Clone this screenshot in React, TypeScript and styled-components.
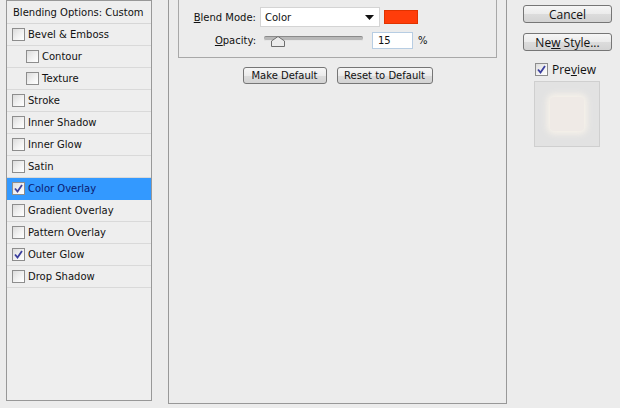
import React from "react";
import styled, { createGlobalStyle } from "styled-components";

const GlobalStyle = createGlobalStyle`
  html, body {
    margin: 0;
    padding: 0;
    background: #ececec;
  }
`;

const styles = [
  { name: "Bevel & Emboss", checked: false, nested: false },
  { name: "Contour", checked: false, nested: true },
  { name: "Texture", checked: false, nested: true },
  { name: "Stroke", checked: false, nested: false },
  { name: "Inner Shadow", checked: false, nested: false },
  { name: "Inner Glow", checked: false, nested: false },
  { name: "Satin", checked: false, nested: false },
  { name: "Color Overlay", checked: true, nested: false, active: true },
  { name: "Gradient Overlay", checked: false, nested: false },
  { name: "Pattern Overlay", checked: false, nested: false },
  { name: "Outer Glow", checked: true, nested: false },
  { name: "Drop Shadow", checked: false, nested: false },
];

function Check({ checked }: { checked: boolean }) {
  return (
    <Box>
      {checked && (
        <svg width="9" height="9" viewBox="0 0 9 9">
          <path d="M1 4.5 L3.5 7.5 L8 1" fill="none" stroke="#3b3f9e" strokeWidth="1.8" />
        </svg>
      )}
    </Box>
  );
}

function App() {
  return (
    <Page>
      <GlobalStyle />
      <StyleList>
        <Header>Blending Options: Custom</Header>
        {styles.map((s) => (
          <Row key={s.name} $active={!!s.active} $nested={s.nested}>
            <Check checked={s.checked} />
            <RowLabel>{s.name}</RowLabel>
          </Row>
        ))}
      </StyleList>

      <Settings>
        <Group>
          <FieldRow>
            <Label><u>B</u>lend Mode:</Label>
            <Select>
              <span>Color</span>
              <svg width="9" height="5" viewBox="0 0 9 5">
                <path d="M0 0 H9 L4.5 5 Z" fill="#111" />
              </svg>
            </Select>
            <Swatch />
          </FieldRow>
          <FieldRow $top={5}>
            <Label><u>O</u>pacity:</Label>
            <Slider>
              <Track />
              <Thumb width="14" height="11" viewBox="0 0 14 11">
                <path d="M0.5 10.5 V5 L7 0.5 L13.5 5 V10.5 Z" fill="#ececec" stroke="#6e6e6e" />
              </Thumb>
            </Slider>
            <NumberBox>15</NumberBox>
            <Unit>%</Unit>
          </FieldRow>
        </Group>
        <ButtonRow>
          <Button $w={84}><span>Make Default</span></Button>
          <Button $w={96}><span>Reset to Default</span></Button>
        </ButtonRow>
      </Settings>

      <Side>
        <Button $w={89} $big><span>Cancel</span></Button>
        <Button $w={89} $big><span>Ne<u>w</u> Style...</span></Button>
        <PreviewRow>
          <Check checked />
          <span>Pre<u>v</u>iew</span>
        </PreviewRow>
        <PreviewBox>
          <Glow />
        </PreviewBox>
      </Side>
    </Page>
  );
}

export default App;

const Page = styled.div`
  width: 620px;
  height: 408px;
  overflow: hidden;
  display: flex;
  align-items: flex-start;
  background: #ececec;
  font-family: "DejaVu Sans", Verdana, sans-serif;
  font-size: 10px;
  color: #111;
`;

const StyleList = styled.div`
  box-sizing: border-box;
  margin-left: 6px;
  width: 146px;
  height: 401px;
  border: 1px solid #989898;
  background: #eeeeee;
  display: flex;
  flex-direction: column;
`;

const Header = styled.div`
  box-sizing: border-box;
  height: 23px;
  padding-left: 6px;
  display: flex;
  align-items: center;
  border-bottom: 1px solid #d6d6d6;
`;

const Row = styled.div<{ $active: boolean; $nested: boolean }>`
  box-sizing: border-box;
  height: 22px;
  display: flex;
  align-items: center;
  gap: 3px;
  padding-left: ${(p) => (p.$nested ? 19 : 5)}px;
  border-bottom: 1px solid ${(p) => (p.$active ? "#3399ff" : "#d9d9d9")};
  background: ${(p) => (p.$active ? "#3399ff" : "transparent")};
  color: ${(p) => (p.$active ? "#0b1a6e" : "#111")};
`;

const RowLabel = styled.span`
  white-space: nowrap;
`;

const Box = styled.span`
  box-sizing: border-box;
  width: 13px;
  height: 13px;
  flex: none;
  border: 1px solid #8d8d8d;
  background: linear-gradient(135deg, #dcdcdc 0%, #f4f4f4 60%, #ffffff 100%);
  display: flex;
  align-items: center;
  justify-content: center;
`;

const Settings = styled.div`
  box-sizing: border-box;
  margin-left: 16px;
  width: 339px;
  height: 404px;
  border: 1px solid #989898;
  border-top: none;
  display: flex;
  flex-direction: column;
`;

const Group = styled.div`
  box-sizing: border-box;
  margin: 0 9px 0 9px;
  height: 58px;
  border: 1px solid #a8a8a8;
  border-top: none;
  padding-top: 7px;
`;

const FieldRow = styled.div<{ $top?: number }>`
  display: flex;
  align-items: center;
  margin-top: ${(p) => p.$top || 0}px;
`;

const Label = styled.span`
  width: 77px;
  text-align: right;
  flex: none;
  u {
    text-decoration: underline;
  }
`;

const Select = styled.div`
  box-sizing: border-box;
  margin-left: 4px;
  width: 120px;
  height: 20px;
  background: #fff;
  border: 1px solid #d4d4d4;
  display: flex;
  align-items: center;
  justify-content: space-between;
  padding: 0 5px 0 4px;
`;

const Swatch = styled.div`
  margin-left: 4px;
  width: 34px;
  height: 14px;
  box-sizing: border-box;
  border: 1px solid #e03300;
  background: #ff3d0a;
`;

const Slider = styled.div`
  position: relative;
  margin-left: 8px;
  width: 99px;
  height: 17px;
`;

const Track = styled.div`
  position: absolute;
  left: 0;
  right: 0;
  top: 4px;
  height: 3px;
  border-radius: 2px;
  background: #b8b8b8;
  border-top: 1px solid #8a8a8a;
  border-bottom: 1px solid #e6e6e6;
`;

const Thumb = styled.svg`
  position: absolute;
  left: 7px;
  top: 4px;
`;

const NumberBox = styled.div`
  box-sizing: border-box;
  margin-left: 9px;
  width: 41px;
  height: 17px;
  background: #fff;
  border: 1px solid #b7cde3;
  padding-left: 5px;
  display: flex;
  align-items: center;
`;

const Unit = styled.span`
  margin-left: 5px;
`;

const ButtonRow = styled.div`
  display: flex;
  justify-content: center;
  gap: 10px;
  margin-top: 9px;
`;

const Button = styled.div<{ $w: number; $big?: boolean }>`
  box-sizing: border-box;
  width: ${(p) => p.$w}px;
  height: ${(p) => (p.$big ? 18 : 17)}px;
  border: 1px solid #767676;
  border-radius: 3px;
  background: linear-gradient(#f6f6f6 0%, #ebebeb 50%, #dcdcdc 51%, #d3d3d3 100%);
  display: flex;
  align-items: center;
  justify-content: center;
  font-family: ${(p) => (p.$big ? '"Open Sans", "Noto Sans", sans-serif' : '"DejaVu Sans", Verdana, sans-serif')};
  font-size: ${(p) => (p.$big ? 12 : 10)}px;
  color: #111;
  white-space: nowrap;
`;

const Side = styled.div`
  margin-left: 16px;
  margin-top: 5px;
  display: flex;
  flex-direction: column;
  gap: 10px;
`;

const PreviewRow = styled.div`
  height: 13px;
  display: flex;
  align-items: center;
  gap: 4px;
  margin-left: 12px;
  margin-top: 2px;
  font-family: "Open Sans", "Noto Sans", sans-serif;
  font-size: 12px;
`;

const PreviewBox = styled.div`
  box-sizing: border-box;
  margin-left: 11px;
  margin-top: -5px;
  width: 66px;
  height: 66px;
  border: 1px solid #cfcfcf;
  background: #e2e2e2;
  display: flex;
  align-items: center;
  justify-content: center;
`;

const Glow = styled.div`
  width: 34px;
  height: 34px;
  border-radius: 4px;
  background: #efeae6;
  box-shadow: 0 0 6px 3px #f7f2ea;
`;
